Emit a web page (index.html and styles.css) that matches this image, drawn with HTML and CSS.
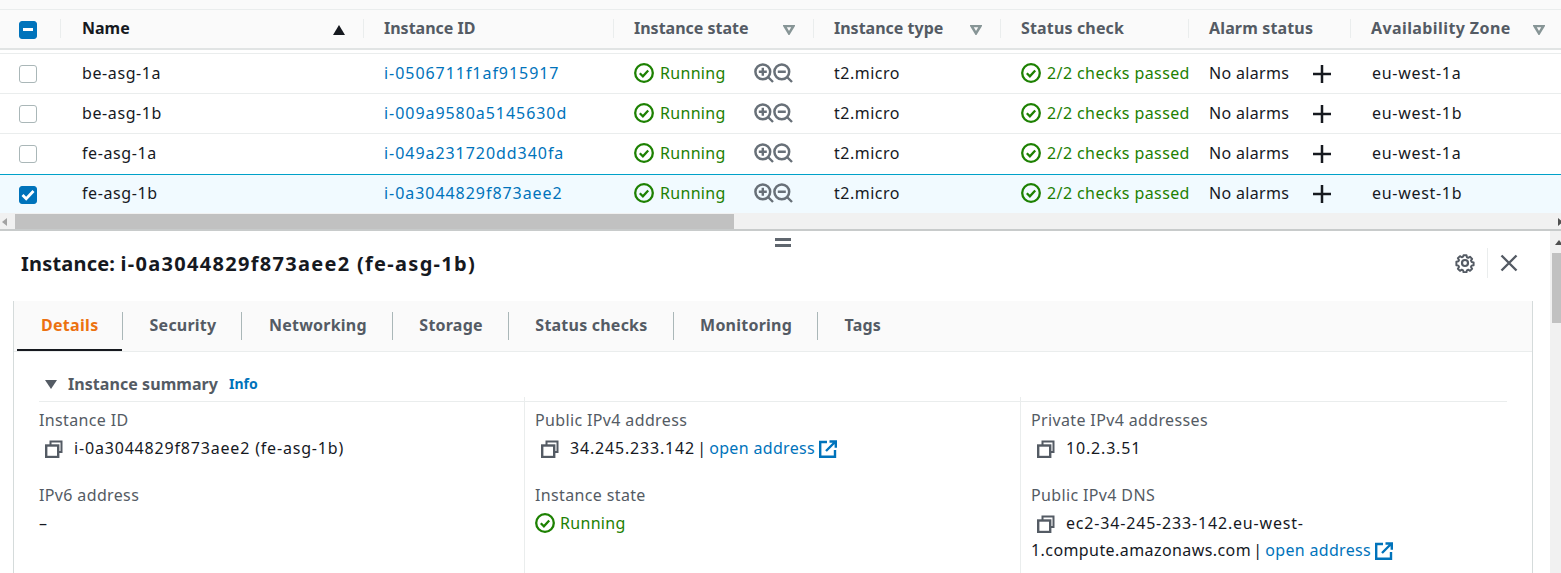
FILE: index.html
```html
<!DOCTYPE html>
<html lang="en">
<head>
<meta charset="utf-8">
<title>Instances</title>
<link rel="stylesheet" href="styles.css">
</head>
<body>
<svg class="defs" width="0" height="0" aria-hidden="true">
  <symbol id="ok" viewBox="0 0 20 20"><circle cx="10" cy="10" r="8.8" fill="none" stroke="currentColor" stroke-width="2.3"/><path d="M5.800 10.200l3.100 3.100 5.300-5.800" fill="none" stroke="currentColor" stroke-width="2.300"/></symbol>
  <symbol id="zin" viewBox="0 0 20 20"><circle cx="8.800" cy="8.800" r="7.400" fill="none" stroke="currentColor" stroke-width="2.500"/><path d="M14 14l5 5M4.800 8.800h8M8.800 4.800v8" fill="none" stroke="currentColor" stroke-width="2.400"/></symbol>
  <symbol id="zout" viewBox="0 0 20 20"><circle cx="8.800" cy="8.800" r="7.400" fill="none" stroke="currentColor" stroke-width="2.500"/><path d="M14 14l5 5M4.800 8.800h8" fill="none" stroke="currentColor" stroke-width="2.400"/></symbol>
  <symbol id="plus" viewBox="0 0 18 18"><path d="M9 0v18M0 9h18" fill="none" stroke="currentColor" stroke-width="2.500"/></symbol>
  <symbol id="copy" viewBox="0 0 18 18"><path d="M5.500 5V1.500h11v10.500h-3.500" fill="none" stroke="currentColor" stroke-width="2"/><rect x="1.200" y="5.500" width="12" height="11.500" fill="none" stroke="currentColor" stroke-width="2.400"/></symbol>
  <symbol id="ext" viewBox="0 0 18 18"><path d="M8 2H1.200v14.800H16V10" fill="none" stroke="currentColor" stroke-width="2.400"/><path d="M7 11L15.500 2.500M10.500 1.500h6.300v6.300" fill="none" stroke="currentColor" stroke-width="2.400"/></symbol>
  <symbol id="filter" viewBox="0 0 12 10"><path d="M1.500 1h9L6 8.400z" fill="none" stroke="currentColor" stroke-width="2.500"/></symbol>
</svg>

<div class="topstrip"></div>
<div class="grid head">
  <div class="cell cb"><span class="check on"><span class="dash"></span></span></div>
  <div class="cell first th dark sep"><span>Name</span><span class="sort"></span></div>
  <div class="cell th sep"><span>Instance ID</span></div>
  <div class="cell th sep"><span>Instance state</span><svg class="fil"><use href="#filter"/></svg></div>
  <div class="cell th sep"><span>Instance type</span><svg class="fil"><use href="#filter"/></svg></div>
  <div class="cell th sep wide"><span>Status check</span></div>
  <div class="cell th sep wide"><span>Alarm status</span></div>
  <div class="cell th sep az"><span>Availability Zone</span><svg class="fil"><use href="#filter"/></svg></div>
</div>
<div class="headgap"></div>

<div class="grid row">
  <div class="cell cb"><span class="check"></span></div>
  <div class="cell first name">be-asg-1a</div>
  <div class="cell"><a class="link idlink">i-0506711f1af915917</a></div>
  <div class="cell state"><span class="run"><svg class="ic20"><use href="#ok"/></svg>Running</span><span class="zoom"><svg class="ic20"><use href="#zin"/></svg><svg class="ic20"><use href="#zout"/></svg></span></div>
  <div class="cell type">t2.micro</div>
  <div class="cell"><span class="run checks"><svg class="ic20"><use href="#ok"/></svg>2/2 checks passed</span></div>
  <div class="cell alarm"><span>No alarms</span><svg class="ic18"><use href="#plus"/></svg></div>
  <div class="cell zone">eu-west-1a</div>
</div>
<div class="grid row">
  <div class="cell cb"><span class="check"></span></div>
  <div class="cell first name">be-asg-1b</div>
  <div class="cell"><a class="link idlink">i-009a9580a5145630d</a></div>
  <div class="cell state"><span class="run"><svg class="ic20"><use href="#ok"/></svg>Running</span><span class="zoom"><svg class="ic20"><use href="#zin"/></svg><svg class="ic20"><use href="#zout"/></svg></span></div>
  <div class="cell type">t2.micro</div>
  <div class="cell"><span class="run checks"><svg class="ic20"><use href="#ok"/></svg>2/2 checks passed</span></div>
  <div class="cell alarm"><span>No alarms</span><svg class="ic18"><use href="#plus"/></svg></div>
  <div class="cell zone">eu-west-1b</div>
</div>
<div class="grid row noline">
  <div class="cell cb"><span class="check"></span></div>
  <div class="cell first name">fe-asg-1a</div>
  <div class="cell"><a class="link idlink">i-049a231720dd340fa</a></div>
  <div class="cell state"><span class="run"><svg class="ic20"><use href="#ok"/></svg>Running</span><span class="zoom"><svg class="ic20"><use href="#zin"/></svg><svg class="ic20"><use href="#zout"/></svg></span></div>
  <div class="cell type">t2.micro</div>
  <div class="cell"><span class="run checks"><svg class="ic20"><use href="#ok"/></svg>2/2 checks passed</span></div>
  <div class="cell alarm"><span>No alarms</span><svg class="ic18"><use href="#plus"/></svg></div>
  <div class="cell zone">eu-west-1a</div>
</div>
<div class="grid row selected">
  <div class="cell cb"><span class="check on"><svg class="tick" viewBox="0 0 18 18"><path d="M3.500 9l3.700 3.700L14.500 5" fill="none" stroke="#fff" stroke-width="2.800"/></svg></span></div>
  <div class="cell first name">fe-asg-1b</div>
  <div class="cell"><a class="link idlink">i-0a3044829f873aee2</a></div>
  <div class="cell state"><span class="run"><svg class="ic20"><use href="#ok"/></svg>Running</span><span class="zoom"><svg class="ic20"><use href="#zin"/></svg><svg class="ic20"><use href="#zout"/></svg></span></div>
  <div class="cell type">t2.micro</div>
  <div class="cell"><span class="run checks"><svg class="ic20"><use href="#ok"/></svg>2/2 checks passed</span></div>
  <div class="cell alarm"><span>No alarms</span><svg class="ic18"><use href="#plus"/></svg></div>
  <div class="cell zone">eu-west-1b</div>
</div>

<div class="hscroll">
  <span class="arrow left"></span>
  <span class="thumb"></span>
  <span class="arrow right"></span>
</div>

<div class="lower">
  <div class="vscroll"><span class="uparrow"></span><span class="vthumb"></span></div>
  <div class="handle"></div>
  <div class="titlebar">
    <h2>Instance: <span class="titleid">i-0a3044829f873aee2 (fe-asg-1b)</span></h2>
    <div class="tools">
      <svg class="gear" viewBox="0 0 20 20"><path d="M8.300 1.300h3.400l.5 2.300 1.500.7 2-1.300 2.400 2.400-1.300 2 .7 1.500 2.300.5v3.200l-2.300.5-.7 1.500 1.300 2-2.400 2.400-2-1.300-1.500.7-.5 2.300H8.300l-.5-2.300-1.500-.7-2 1.300-2.400-2.400 1.300-2-.7-1.500-2.300-.5V8.700l2.300-.5.7-1.500-1.300-2 2.400-2.400 2 1.300 1.500-.7z" fill="none" stroke="currentColor" stroke-width="2.200" stroke-linejoin="round" transform="translate(1.200 1.100) scale(.88)"/><circle cx="10" cy="10" r="3" fill="none" stroke="currentColor" stroke-width="2.200"/></svg>
      <span class="vsep"></span>
      <svg class="close" viewBox="0 0 18 18"><path d="M1.500 1.500l15 15M16.500 1.500l-15 15" fill="none" stroke="currentColor" stroke-width="2.400"/></svg>
    </div>
  </div>
  <div class="panel">
    <div class="tabs">
      <span class="tab active">Details</span>
      <span class="tab">Security</span>
      <span class="tab">Networking</span>
      <span class="tab">Storage</span>
      <span class="tab">Status checks</span>
      <span class="tab">Monitoring</span>
      <span class="tab last">Tags</span>
    </div>
    <div class="summary">
      <div class="sumhead"><span class="caret"></span><span class="sumtitle">Instance summary</span><a class="info">Info</a></div>
      <div class="cols">
        <div class="col">
          <div class="lbl">Instance ID</div>
          <div class="val"><svg class="ic18 copy"><use href="#copy"/></svg><span class="num">i-0a3044829f873aee2 (fe-asg-1b)</span></div>
          <div class="lbl">IPv6 address</div>
          <div class="val">–</div>
        </div>
        <div class="col">
          <div class="lbl">Public IPv4 address</div>
          <div class="val"><svg class="ic18 copy"><use href="#copy"/></svg><span class="num before">34.245.233.142</span> | <a class="link open">open address</a> <svg class="ic18 ext"><use href="#ext"/></svg></div>
          <div class="lbl">Instance state</div>
          <div class="val"><span class="run"><svg class="ic20"><use href="#ok"/></svg>Running</span></div>
        </div>
        <div class="col">
          <div class="lbl">Private IPv4 addresses</div>
          <div class="val"><svg class="ic18 copy"><use href="#copy"/></svg><span class="num">10.2.3.51</span></div>
          <div class="lbl">Public IPv4 DNS</div>
          <div class="val wrap"><svg class="ic18 copy"><use href="#copy"/></svg><span class="num">ec2-34-245-233-142.eu-west-</span><br><span class="host before">1.compute.amazonaws.com</span> | <a class="link open">open address</a> <svg class="ic18 ext"><use href="#ext"/></svg></div>
        </div>
      </div>
    </div>
  </div>
</div>
</body>
</html>
```
FILE: styles.css
```css
* { box-sizing: border-box; }
html, body { margin: 0; padding: 0; height: 573px; overflow: hidden; background: #fff; }
body { font-family: "Noto Sans", "Open Sans", sans-serif; font-size: 16px; line-height: 24px; color: #16191f; }
.defs { position: absolute; }
.topstrip { height: 10px; background: #fafafa; border-bottom: 1px solid #eaeded; }
.grid { display: grid; grid-template-columns: 60px 303px 250px 200px 187px 188px 162px 211px; }
.head { height: 40px; background: #fafafa; border-bottom: 2px solid #e1e4e4; padding-bottom: 3px; }
.headgap { height: 4px; border-bottom: 1px solid #eaeded; }
.row { height: 40px; border-bottom: 1px solid #eaeded; background: #fff; padding-bottom: 1px; }
.row.noline { border-bottom: 0; padding-bottom: 2px; }
.row.selected { height: 39px; border-top: 1px solid #00a1c9; border-bottom: 0; background: #f1faff; padding-bottom: 2px; }
.cell { display: flex; align-items: center; padding-left: 21px; min-width: 0; white-space: nowrap; }
.cell.first { padding-left: 22px; }
.cb { padding-left: 19px; padding-top: 2px; }
.head .cb { padding-top: 4px; }
.selected .cb { padding-top: 3px; }
.th { font-weight: 700; color: #545b64; position: relative; padding-right: 16px; justify-content: space-between; }
.th.wide { letter-spacing: .15px; }
.dark { color: #16191f; }
.sep::before { content: ""; position: absolute; left: 0; top: 9px; height: 19px; width: 1px; background: #eaeded; }
.sort { width: 0; height: 0; border-left: 6px solid transparent; border-right: 6px solid transparent; border-bottom: 10px solid #16191f; margin: 5px 2px 0 0; }
.fil { width: 12px; height: 10px; color: #879596; margin: 5px 2px 0 0; }
.th.az { padding-right: 14px; letter-spacing: .4px; }
.name { letter-spacing: .6px; }
.type { letter-spacing: .5px; }
.zone { letter-spacing: .7px; padding-left: 22px; }
.check { width: 18px; height: 18px; border: 1px solid #aab7b8; border-radius: 3px; background: #fff; display: flex; align-items: center; justify-content: center; }
.check.on { background: #0073bb; border-color: #0073bb; }
.dash { width: 10px; height: 3px; background: #fff; }
.tick { width: 18px; height: 18px; flex: none; }
.link { color: #0073bb; text-decoration: none; letter-spacing: .33px; }
.link.idlink { letter-spacing: .95px; }
.before { margin-right: -2px; }
.open { margin-left: -1px; }
.run { color: #1d8102; display: inline-flex; align-items: center; gap: 6px; letter-spacing: .3px; }
.val .run { gap: 5px; vertical-align: top; }
.checks { letter-spacing: .4px; }
.ic20 { width: 20px; height: 20px; flex: none; }
.ic18 { width: 18px; height: 18px; flex: none; }
.zoom { display: inline-flex; color: #687078; margin-left: 28px; }
.zoom .ic20 + .ic20 { margin-left: -1px; }
.alarm { gap: 24px; letter-spacing: .33px; }
.alarm .ic18 { margin-top: 1px; }
.hscroll { height: 18px; background: #f1f1f1; border-bottom: 2px solid #c8cbcb; display: flex; align-items: flex-end; overflow: hidden; }
.thumb { width: 719px; height: 15px; background: #c1c1c1; }
.arrow { width: 0; height: 0; border-top: 4px solid transparent; border-bottom: 4px solid transparent; margin-bottom: 3px; }
.arrow.left { border-right: 5px solid #a3a3a3; margin-left: 2px; margin-right: 8px; }
.arrow.right { border-left: 5px solid #505050; margin-left: auto; margin-right: -2px; }
.lower { position: relative; height: 342px; }
.vscroll { position: absolute; right: 0; top: 0; bottom: 0; width: 11px; background: #f1f1f1; overflow: hidden; }
.vthumb { position: absolute; left: 2px; right: 0; top: 22px; height: 70px; background: #c1c1c1; }
.uparrow { position: absolute; left: 5px; top: 9px; width: 0; height: 0; border-left: 4px solid transparent; border-right: 4px solid transparent; border-bottom: 5px solid #505050; }
.handle { position: absolute; left: 775px; top: 7px; width: 16px; height: 9px; border-top: 3px solid #5f666e; border-bottom: 3px solid #5f666e; }
.titlebar { height: 70px; padding: 0 42px 4px 21px; display: flex; align-items: center; justify-content: space-between; }
h2 { margin: 0; font-size: 20px; line-height: 28px; font-weight: 700; color: #16191f; letter-spacing: .2px; }
.titleid { letter-spacing: 1.3px; }
.tools { display: flex; align-items: center; color: #545b64; margin-top: -3px; }
.gear { width: 20px; height: 20px; }
.vsep { width: 1px; height: 30px; background: #eaeded; margin: 0 12px; }
.close { width: 18px; height: 18px; margin-right: 1px; }
.panel { margin-left: 13px; width: 1520px; height: 272px; border-left: 1px solid #d5dbdb; border-right: 1px solid #d5dbdb; }
.tabs { height: 51px; background: #fafafa; border-bottom: 1px solid #eaeded; display: flex; align-items: center; padding: 0 0 1px 3px; }
.tab { font-weight: 700; color: #545b64; padding: 0 25px 0 26.600px; border-right: 1px solid #aab7b8; height: 28px; line-height: 26px; letter-spacing: .22px; }
.tab.last { border-right: 0; }
.tab.active { color: #ec7211; position: relative; padding: 0 23.500px 0 24px; letter-spacing: .3px; }
.tab.active::after { content: ""; position: absolute; left: 0; right: 0; bottom: -11px; height: 2px; background: #16191f; }
.summary { padding: 20px 25px 0 25px; }
.sumhead { height: 30px; display: flex; align-items: center; border-bottom: 1px solid #eaeded; padding: 0 0 6px 6px; }
.caret { width: 0; height: 0; border-left: 6.500px solid transparent; border-right: 6.500px solid transparent; border-top: 9px solid #545b64; margin: 2px 11px 0 0; }
.sumtitle { font-weight: 700; color: #545b64; letter-spacing: .06px; }
.info { color: #0073bb; font-weight: 700; font-size: 14px; margin-left: 11px; }
.cols { display: grid; grid-template-columns: 485px 496px 1fr; }
.col { border-left: 1px solid #eaeded; padding-left: 10px; margin-top: -5px; padding-top: 11px; height: 180px; }
.col:first-child { border-left: 0; padding-left: 0; }
.lbl { color: #545b64; height: 24px; letter-spacing: .36px; }
.val { height: 51px; padding-top: 4px; white-space: nowrap; }
.val.wrap { height: auto; line-height: 27px; padding-top: 3px; }
.num { letter-spacing: .82px; }
.host { letter-spacing: .42px; }
.copy { color: #545b64; margin: 0 11px 0 6px; vertical-align: -4px; }
.ext { color: #0073bb; vertical-align: -4px; }
```
